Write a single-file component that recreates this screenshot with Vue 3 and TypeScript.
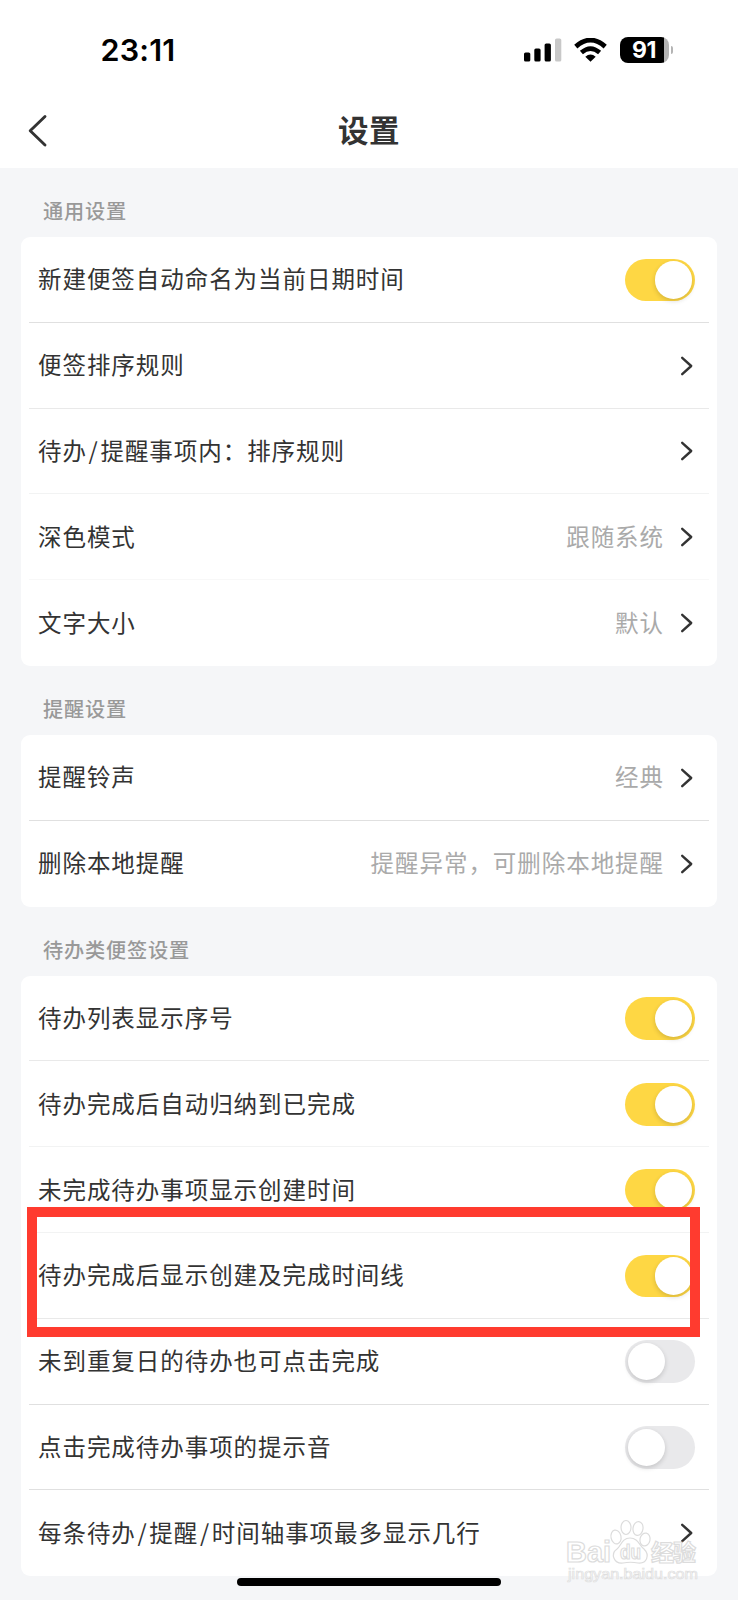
<script setup lang="ts">
interface Row {
  label: string
  value?: string
  on?: boolean
  line?: string
  marked?: boolean
}
interface Section {
  title: string
  rows: Row[]
}

const sections: Section[] = [
  {
    title: '通用设置',
    rows: [
      { label: '新建便签自动命名为当前日期时间', on: true, line: 'strong' },
      { label: '便签排序规则', line: 'mid' },
      { label: '待办/提醒事项内：排序规则', line: 'soft' },
      { label: '深色模式', value: '跟随系统', line: 'faint' },
      { label: '文字大小', value: '默认' },
    ],
  },
  {
    title: '提醒设置',
    rows: [
      { label: '提醒铃声', value: '经典', line: 'strong' },
      { label: '删除本地提醒', value: '提醒异常，可删除本地提醒' },
    ],
  },
  {
    title: '待办类便签设置',
    rows: [
      { label: '待办列表显示序号', on: true, line: 'mid' },
      { label: '待办完成后自动归纳到已完成', on: true, line: 'soft' },
      { label: '未完成待办事项显示创建时间', on: true, line: 'soft' },
      { label: '待办完成后显示创建及完成时间线', on: true, line: 'mid', marked: true },
      { label: '未到重复日的待办也可点击完成', on: false, line: 'strong' },
      { label: '点击完成待办事项的提示音', on: false, line: 'strong' },
      { label: '每条待办/提醒/时间轴事项最多显示几行' },
    ],
  },
]

const pieces = (label: string): string[] => label.split(/(\/)/)
</script>

<template>
  <div class="screen">
    <header class="top">
      <div class="status">
        <span class="clock">23:11</span>
        <div class="indicators">
          <svg class="signal" width="38" height="24" viewBox="0 0 38 24">
            <rect x="0" y="14.5" width="6.3" height="9" rx="1.6" />
            <rect x="10.3" y="10.5" width="6.3" height="13" rx="1.6" />
            <rect x="20.6" y="5.5" width="6.3" height="18" rx="1.6" />
            <rect x="31" y="0.5" width="6.3" height="23" rx="1.6" fill="#c8c8c8" />
          </svg>
          <svg class="wifi" width="33" height="24" viewBox="0 0 33 24">
            <path d="M1.8 8.6 Q16.5 -4.4 31.2 8.6" fill="none" stroke="#000" stroke-width="4.8" />
            <path d="M7.4 14.6 Q16.5 6.6 25.6 14.6" fill="none" stroke="#000" stroke-width="4.6" />
            <path d="M11.3 18.8 Q16.5 14.3 21.7 18.8 L16.5 23.8Z" />
          </svg>
          <div class="battery"><span>91</span></div>
          <i class="tip"></i>
        </div>
      </div>
      <nav class="nav">
        <svg class="back" width="20" height="34" viewBox="0 0 20 34">
          <path d="M17 2.5 L2.2 16.8 L17 31" />
        </svg>
        <h1>设置</h1>
      </nav>
    </header>

    <section v-for="section in sections" :key="section.title" class="section">
      <h2>{{ section.title }}</h2>
      <div class="card">
        <div v-for="row in section.rows" :key="row.label" class="row" :class="row.line">
          <span class="label"><span v-for="(piece, i) in pieces(row.label)" :key="i" :class="{ slash: piece === '/' }">{{ piece }}</span></span>
          <span v-if="row.value" class="value">{{ row.value }}</span>
          <span v-if="row.on !== undefined" class="switch" :class="{ on: row.on }"><i></i></span>
          <svg v-else class="chevron" width="13" height="20" viewBox="0 0 13 20">
            <path d="M2.2 1.8 L11.2 10 L2.2 18.2" />
          </svg>
          <div v-if="row.marked" class="marker"></div>
        </div>
      </div>
    </section>

    <svg class="watermark" width="140" height="66" viewBox="0 0 140 66">
      <g class="outline">
        <text x="5" y="44" font-size="30" font-weight="700" textLength="45" lengthAdjust="spacingAndGlyphs">Bai</text>
        <ellipse cx="55" cy="19" rx="5" ry="7" transform="rotate(-12 55 19)" />
        <ellipse cx="65" cy="9.5" rx="5" ry="7" />
        <ellipse cx="77" cy="10.5" rx="5" ry="7" transform="rotate(8 77 10.5)" />
        <ellipse cx="84" cy="21.5" rx="5" ry="6.5" transform="rotate(12 84 21.5)" />
        <path d="M69 20 C61 20 60 28 56 31 C49 36 53 46 62 45 C67 44 72 44 77 45 C86 46 89 37 83 31 C78 27 77 20 69 20Z" />
        <text x="59" y="41" font-size="20" font-weight="700" textLength="21" lengthAdjust="spacingAndGlyphs">du</text>
        <text class="cjk" x="90" y="42.5" font-size="23" font-weight="700" textLength="45">经验</text>
      </g>
      <text class="site" x="7" y="61" font-size="14" textLength="130" lengthAdjust="spacingAndGlyphs">jingyan.baidu.com</text>
    </svg>
    <div class="home"></div>
  </div>
</template>

<style>
body {
  background: #f5f6f8;
}
</style>

<style scoped>
.screen {
  position: relative;
  width: 738px;
  height: 1600px;
  overflow: hidden;
  background: #f5f6f8;
  font-family: "Noto Sans CJK SC", "Liberation Sans", sans-serif;
  color: #333;
}
.top {
  height: 168px;
  background: #fff;
}
.status {
  height: 94px;
  box-sizing: border-box;
  padding: 6px 65px 0 100.5px;
  display: flex;
  align-items: center;
  justify-content: space-between;
  color: #000;
}
.clock {
  font: 600 30.5px/36px Inter, sans-serif;
  letter-spacing: 0.2px;
}
.indicators {
  display: flex;
  align-items: center;
}
.wifi {
  margin-left: 12.5px;
}
.battery {
  width: 49px;
  height: 26px;
  margin-left: 12.5px;
  border-radius: 8px;
  background: linear-gradient(90deg, #000 44px, #b4b4b4 44px);
  color: #fff;
  font: 700 23px/27px Inter, sans-serif;
  letter-spacing: -0.4px;
  text-align: center;
}
.tip {
  width: 2.5px;
  height: 8px;
  margin-left: 2px;
  border-radius: 0 4px 4px 0;
  background: #b4b4b4;
}
.nav {
  height: 74px;
  padding: 0 28px;
  display: grid;
  grid-template-columns: 20px 1fr 20px;
  align-items: center;
}
.back {
  margin-top: -1px;
}
.back path,
.chevron path {
  fill: none;
  stroke: #333;
  stroke-width: 2.9;
  stroke-linecap: round;
  stroke-linejoin: round;
}
.chevron path {
  stroke-width: 2.4;
}
h1,
h2 {
  margin: 0;
}
h1 {
  padding-bottom: 4px;
  text-align: center;
  font-size: 30.5px;
  line-height: 60px;
  font-weight: 600;
  letter-spacing: 0.6px;
}
.section {
  padding: 0 21px;
}
h2 {
  height: 69px;
  box-sizing: border-box;
  padding: 28px 0 0 22px;
  font-size: 20.2px;
  line-height: 29px;
  font-weight: 500;
  letter-spacing: 0.8px;
  color: #999;
}
.card {
  background: #fff;
  border-radius: 9px;
}
.row {
  position: relative;
  height: 85.8px;
  padding: 0 22px 0 17px;
  display: flex;
  align-items: center;
  font-size: 23.5px;
  letter-spacing: 0.95px;
  white-space: nowrap;
}
.row::after {
  content: "";
  position: absolute;
  left: 8px;
  right: 8px;
  bottom: 0;
  height: 1px;
  background: transparent;
}
.strong::after {
  background: #e0e0e0;
}
.mid::after {
  background: #e9e9e9;
}
.soft::after {
  background: #f2f3f3;
}
.faint::after {
  background: #f8f8f8;
}
.label {
  flex: 1;
  padding-bottom: 3px;
}
.slash {
  padding: 0 1.7px;
}
.value {
  color: #aaa;
  padding-bottom: 3px;
  margin-right: 16px;
}
.chevron {
  margin-right: 2px;
}
.switch {
  width: 70px;
  height: 42.5px;
  box-sizing: border-box;
  padding: 2.7px;
  display: flex;
  border-radius: 22px;
  background: #e9e9eb;
}
.switch i {
  width: 37.3px;
  height: 37.3px;
  border-radius: 50%;
  background: #fff;
  box-shadow: 0 2px 5px rgba(0, 0, 0, 0.16);
}
.on {
  justify-content: flex-end;
  background: #fed744;
}
.marker {
  position: absolute;
  z-index: 2;
  left: 6px;
  top: -26.3px;
  width: 653px;
  height: 110px;
  border: 10px solid #ff3b2f;
}
.watermark {
  position: absolute;
  left: 561px;
  top: 1518px;
  font-family: "Liberation Sans", sans-serif;
}
.outline > * {
  fill: #fff;
  stroke: #dcdcdc;
  stroke-width: 1.2;
}
.cjk {
  font-family: "Noto Sans CJK SC", sans-serif;
}
.site {
  fill: #fff;
  stroke: #dedede;
  stroke-width: 0.7;
}
.home {
  position: absolute;
  left: 237px;
  top: 1577.5px;
  width: 264px;
  height: 8.5px;
  border-radius: 5px;
  background: #000;
}
</style>
